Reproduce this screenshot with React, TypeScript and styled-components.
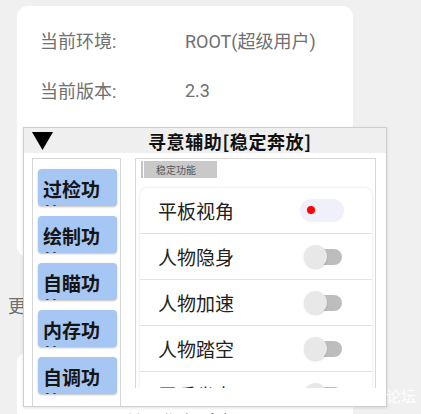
import React from "react";
import styled, { createGlobalStyle, css } from "styled-components";

const Global = createGlobalStyle`
  html, body { margin: 0; padding: 0; }
  body {
    background: #f0f0f0;
    font-family: Roboto, "Noto Sans CJK SC", sans-serif;
    width: 421px;
    height: 414px;
    overflow: hidden;
  }
`;

const Page = styled.div`
  position: relative;
  width: 421px;
  height: 414px;
  overflow: hidden;
  padding-top: 6px;
  box-sizing: border-box;
`;

const Card = styled.div<{ $h?: number }>`
  margin-left: 17px;
  width: 336px;
  height: ${(p) => (p.$h ? `${p.$h}px` : "auto")};
  background: #fff;
  border-radius: 11px;
  box-sizing: border-box;
  padding: 9px 0 0 23px;
`;

const InfoRow = styled.div`
  display: flex;
  height: 50px;
  align-items: center;
  font-size: 18px;
  color: #707070;
`;

const InfoLabel = styled.span`
  width: 145px;
`;

const SectionTitle = styled.div`
  margin: 37px 0 0 8px;
  font-size: 18px;
  color: #707070;
  height: 25px;
  line-height: 25px;
`;

const LowerCard = styled.div`
  margin: 33px 0 0 17px;
  width: 336px;
  height: 80px;
  background: #fff;
  border-radius: 11px 11px 0 0;
  padding: 56px 0 0 108px;
  box-sizing: border-box;
  font-size: 18px;
  color: #444;
`;

const Window = styled.div`
  position: absolute;
  left: 23px;
  top: 127px;
  width: 364px;
  height: 280px;
  background: #fff;
  border: 1px solid #cfcfcf;
  box-sizing: border-box;
  display: flex;
  flex-direction: column;
  box-shadow: 0 1px 3px rgba(0, 0, 0, 0.12);
`;

const TitleBar = styled.div`
  height: 25px;
  background: #efefef;
  display: flex;
  align-items: center;
  padding-left: 8px;
  flex-shrink: 0;
`;

const Title = styled.div`
  margin-left: 95px;
  font-size: 18px;
  font-weight: bold;
  color: #111;
  font-family: "Noto Sans CJK SC", sans-serif;
  letter-spacing: 0.6px;
`;

const Body = styled.div`
  flex: 1;
  display: flex;
  gap: 14px;
  padding: 5px 10px 0 8px;
  min-height: 0;
`;

const SidePanel = styled.div`
  width: 89px;
  border: 1px solid #d6d6d6;
  border-bottom: none;
  box-sizing: border-box;
  display: flex;
  flex-direction: column;
  gap: 10px;
  padding: 10px 3px 0 5px;
`;

const SideButton = styled.div`
  height: 37px;
  flex-shrink: 0;
  background: #a6c7f3;
  border-radius: 4px;
  padding: 7px 6px 0 5px;
  box-sizing: border-box;
  overflow: hidden;
  font-family: "Noto Sans CJK SC", sans-serif;
  font-size: 19px;
  font-weight: bold;
  line-height: 25px;
  color: #151515;
  box-shadow: 0 1px 2px rgba(0, 0, 0, 0.25);
`;

const MainPanel = styled.div`
  flex: 1;
  height: 230px;
  border: 1px solid #d8d8d8;
  border-bottom: none;
  box-sizing: border-box;
  padding: 2px 3px 0 4px;
  overflow: hidden;
`;

const TabRow = styled.div`
  display: flex;
  align-items: stretch;
  height: 17px;
  padding-left: 1px;
`;

const TabBar = styled.div`
  width: 2px;
  background: #c4c4c4;
`;

const Tab = styled.div`
  width: 73px;
  margin-left: 1px;
  background: #c9c9c9;
  font-family: "Noto Sans CJK SC", sans-serif;
  font-size: 10px;
  color: #555;
  line-height: 17px;
  padding-left: 12px;
  box-sizing: border-box;
`;

const ListCard = styled.div`
  margin-top: 10px;
  background: #fff;
  border-radius: 8px 8px 0 0;
  box-shadow: 0 0 3px rgba(0, 0, 0, 0.13);
`;

const Row = styled.div`
  height: 46px;
  border-bottom: 1px solid #e2e2e2;
  box-sizing: border-box;
  display: flex;
  align-items: center;
  justify-content: space-between;
  padding: 0 28px 0 18px;
  font-family: "Noto Sans CJK SC", sans-serif;
  font-size: 19px;
  color: #222;
`;

const Switch = styled.div<{ $on?: boolean }>`
  position: relative;
  width: 44px;
  height: 23px;
  flex-shrink: 0;
  ${(p) =>
    p.$on
      ? css`
          background: #f0f0fb;
          border-radius: 12px;
          &::after {
            content: "";
            position: absolute;
            left: 7px;
            top: 7px;
            width: 8px;
            height: 8px;
            border-radius: 50%;
            background: #f00;
          }
        `
      : css`
          &::before {
            content: "";
            position: absolute;
            left: 14px;
            top: 4px;
            width: 28px;
            height: 16px;
            border-radius: 8px;
            background: #bdbdbd;
          }
          &::after {
            content: "";
            position: absolute;
            left: 4px;
            top: 0;
            width: 23px;
            height: 23px;
            border-radius: 50%;
            background: #e8e8e8;
            box-shadow: 0 1px 2px rgba(0, 0, 0, 0.15);
          }
        `}
`;

const Watermark = styled.div`
  position: absolute;
  left: 386px;
  top: 385px;
  font-family: "Noto Sans CJK SC", sans-serif;
  font-size: 15px;
  color: rgba(255, 255, 255, 0.95);
`;

const sideItems = ["过检功能", "绘制功能", "自瞄功能", "内存功能", "自调功能"];
const rows = [
  { label: "平板视角", on: true },
  { label: "人物隐身", on: false },
  { label: "人物加速", on: false },
  { label: "人物踏空", on: false },
  { label: "无后坐力", on: false },
];

export default function App() {
  return (
    <>
      <Global />
      <Page>
        <Card $h={251}>
          <InfoRow>
            <InfoLabel>当前环境:</InfoLabel>
            <span>ROOT(超级用户)</span>
          </InfoRow>
          <InfoRow>
            <InfoLabel>当前版本:</InfoLabel>
            <span>2.3</span>
          </InfoRow>
        </Card>
        <SectionTitle>更多功能</SectionTitle>
        <LowerCard>关于作者(金標)</LowerCard>

        <Window>
          <TitleBar>
            <svg width="21" height="18" viewBox="0 0 21 18">
              <polygon points="0,0 21,0 10.5,18" fill="#000" />
            </svg>
            <Title>寻意辅助[稳定奔放]</Title>
          </TitleBar>
          <Body>
            <SidePanel>
              {sideItems.map((s) => (
                <SideButton key={s}>{s}</SideButton>
              ))}
            </SidePanel>
            <MainPanel>
              <TabRow>
                <TabBar />
                <Tab>稳定功能</Tab>
              </TabRow>
              <ListCard>
                {rows.map((r) => (
                  <Row key={r.label}>
                    <span>{r.label}</span>
                    <Switch $on={r.on} />
                  </Row>
                ))}
              </ListCard>
            </MainPanel>
          </Body>
        </Window>
        <Watermark>论坛</Watermark>
      </Page>
    </>
  );
}
